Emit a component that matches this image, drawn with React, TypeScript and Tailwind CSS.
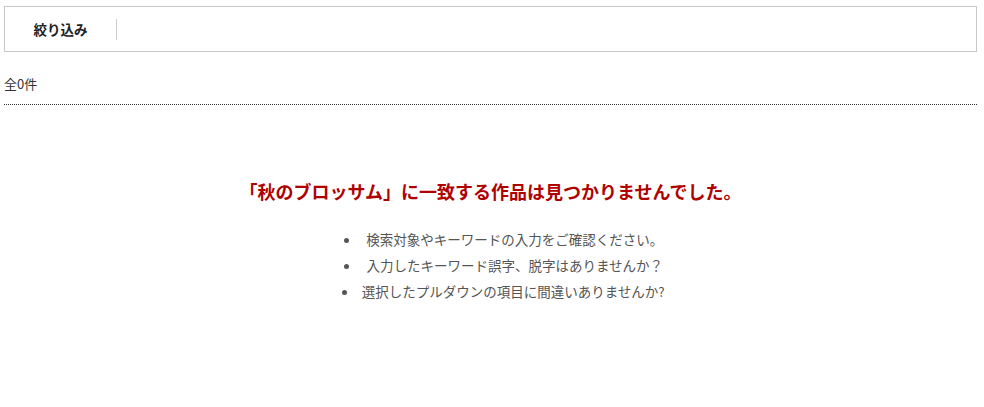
export default function App() {
  const font = { fontFamily: '"Noto Sans CJK JP", "Noto Sans", sans-serif' };
  return (
    <div className="bg-white min-h-[407px] w-[984px]" style={font}>
      <div className="pt-[6px] pl-[4px] w-[977px]">
        <div className="h-[46px] border border-[#c8c8c8] flex items-center">
          <div className="w-[112px] h-[21px] border-r border-[#cccccc] flex items-center justify-center text-[13.5px] font-bold text-[#222]">
            絞り込み
          </div>
        </div>
        <div className="mt-[22px] pb-[10px] border-b border-dotted border-[#333] text-[13px] leading-[20px] text-[#333]">
          全0件
        </div>
        <h2 className="mt-[74px] text-center text-[18px] leading-[24px] font-bold text-[#b00000]">
          「秋のブロッサム」に一致する作品は見つかりませんでした。
        </h2>
        <ul className="mt-[23px] pl-[26px] list-disc list-inside text-center text-[13.5px] leading-[26px] text-[#555]">
          <li>&nbsp;検索対象やキーワードの入力をご確認ください。</li>
          <li>&nbsp;入力したキーワード誤字、脱字はありませんか？</li>
          <li>選択したプルダウンの項目に間違いありませんか?</li>
        </ul>
      </div>
    </div>
  );
}
